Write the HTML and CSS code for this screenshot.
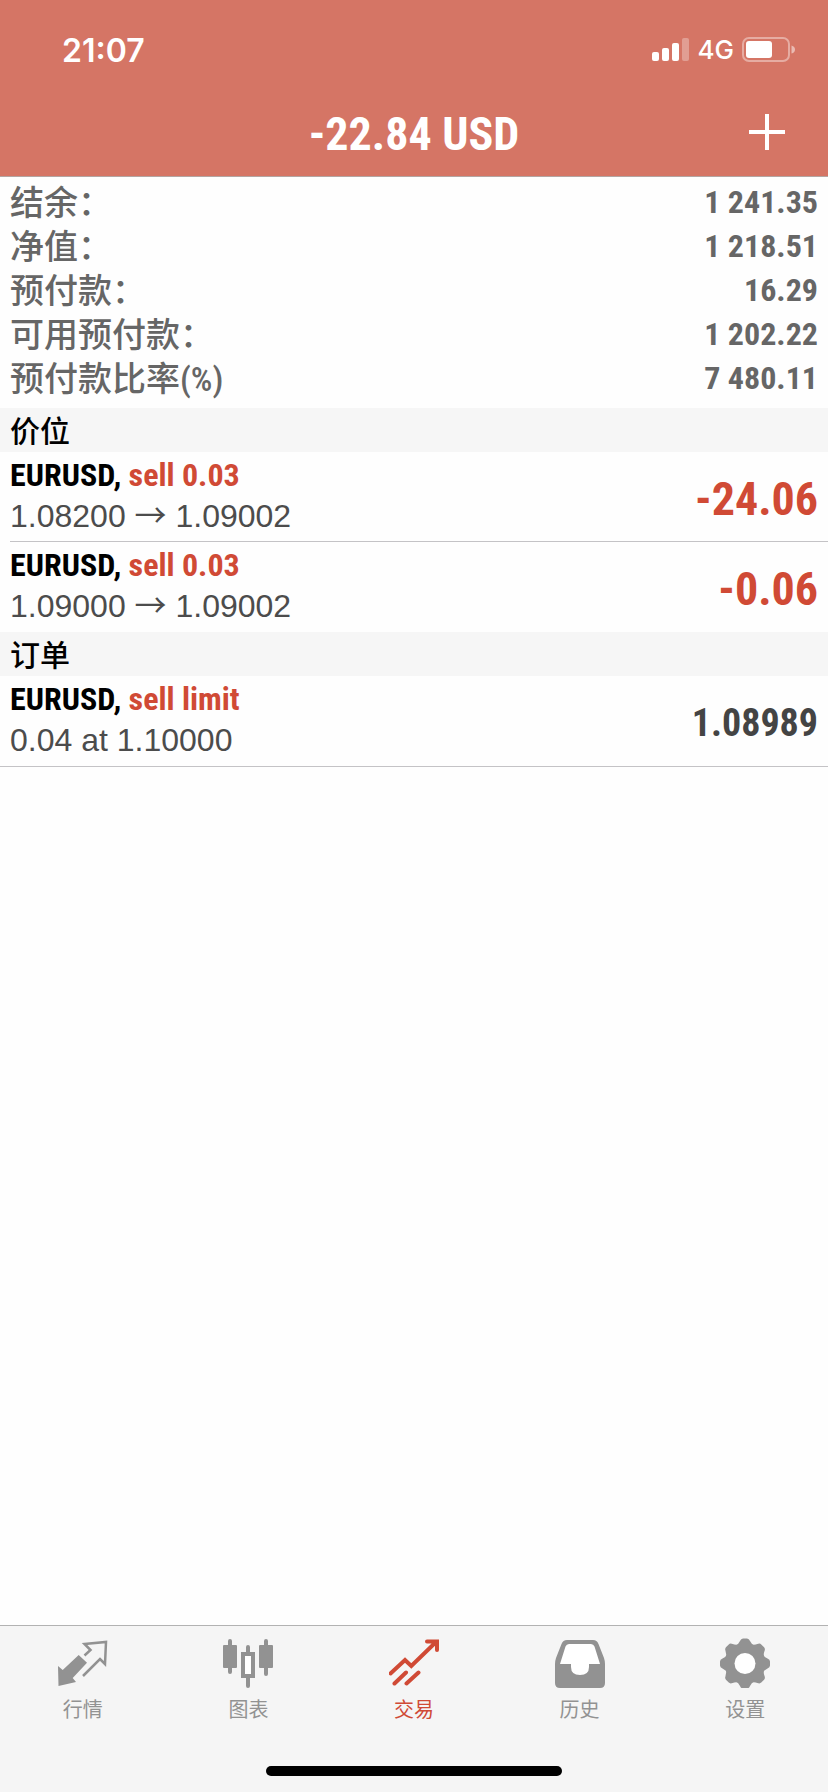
FILE: index.html
```html
<!DOCTYPE html>
<html lang="zh-CN">
<head>
<meta charset="utf-8">
<meta name="viewport" content="width=device-width">
<title>交易</title>
<link rel="stylesheet" href="styles.css">
</head>
<body>
<div class="app">
  <header class="header">
    <div class="status">
      <time class="clock">21:07</time>
      <div class="indicators">
        <svg class="signal" viewBox="0 0 38 24" aria-hidden="true">
          <rect x="0" y="14" width="7" height="9" rx="2"/>
          <rect x="10" y="10" width="7" height="13" rx="2"/>
          <rect x="20" y="5" width="7" height="18" rx="2"/>
          <rect x="30" y="0" width="7" height="23" rx="2" opacity=".3"/>
        </svg>
        <span class="network">4G</span>
        <svg class="battery" viewBox="0 0 54 26" aria-hidden="true">
          <rect x="1" y="1" width="46" height="23" rx="6" fill="none" stroke="#fff" stroke-width="2" opacity=".4"/>
          <rect x="4" y="4" width="26" height="17" rx="3"/>
          <path d="M49.500 8.500q3.500 1 3.500 4t-3.500 4z" opacity=".5"/>
        </svg>
      </div>
    </div>
    <div class="titlebar">
      <h1 class="title">-22.84 USD</h1>
      <button class="add" type="button" aria-label="新订单">
        <svg class="add-icon" viewBox="0 0 36 36" aria-hidden="true"><path d="M18 0V36M0 18H36" stroke="#fff" stroke-width="4"/></svg>
      </button>
    </div>
  </header>

  <main class="content">
    <dl class="summary">
      <div class="summary-row"><dt>结余：</dt><dd>1 241.35</dd></div>
      <div class="summary-row"><dt>净值：</dt><dd>1 218.51</dd></div>
      <div class="summary-row"><dt>预付款：</dt><dd>16.29</dd></div>
      <div class="summary-row"><dt>可用预付款：</dt><dd>1 202.22</dd></div>
      <div class="summary-row"><dt>预付款比率(%)</dt><dd>7 480.11</dd></div>
    </dl>

    <h2 class="section">价位</h2>
    <ul class="list">
      <li class="item">
        <div class="item-main">
          <div class="symbol">EURUSD, <span class="side">sell 0.03</span></div>
          <div class="detail">1.08200 <span class="arrow">→</span> 1.09002</div>
        </div>
        <div class="profit">-24.06</div>
      </li>
      <li class="item">
        <div class="item-main">
          <div class="symbol">EURUSD, <span class="side">sell 0.03</span></div>
          <div class="detail">1.09000 <span class="arrow">→</span> 1.09002</div>
        </div>
        <div class="profit">-0.06</div>
      </li>
    </ul>

    <h2 class="section">订单</h2>
    <ul class="list list-last">
      <li class="item">
        <div class="item-main">
          <div class="symbol">EURUSD, <span class="side">sell limit</span></div>
          <div class="detail">0.04 at 1.10000</div>
        </div>
        <div class="price">1.08989</div>
      </li>
    </ul>
  </main>

  <footer class="footer">
    <nav class="tabs">
      <a class="tab" href="#quotes">
        <svg class="tab-icon" viewBox="0 0 50 50" aria-hidden="true">
          <path d="M20.700 17L29 24.700L14.700 40L18 44L.5 48L0 28L4.700 32Z"/>
          <path d="M26.500 17.500L32.500 12L26.500 6L48 4L47 26L42 21L25 38" fill="none" stroke="currentColor" stroke-width="2.500"/>
        </svg>
        <span>行情</span>
      </a>
      <a class="tab" href="#charts">
        <svg class="tab-icon" viewBox="0 0 50 50" aria-hidden="true">
          <path d="M7 3V34M25 9V48M43 3V36" stroke="currentColor" stroke-width="4" stroke-linecap="round"/>
          <rect x="0" y="7" width="14" height="23" rx="1"/>
          <rect x="36" y="7" width="14" height="23" rx="1"/>
          <rect x="20" y="16" width="10" height="22" fill="#fff" stroke="currentColor" stroke-width="4"/>
        </svg>
        <span>图表</span>
      </a>
      <a class="tab tab-active" href="#trade" aria-current="page">
        <svg class="tab-icon" viewBox="0 0 50 50" aria-hidden="true">
          <path d="M1.500 35.500L16 22L22.300 28L47 4M38 3.500H48V12M5.500 45.500L17 34.500M17.500 45.500L29.500 34.500" fill="none" stroke="currentColor" stroke-width="4" stroke-linecap="round" stroke-linejoin="miter"/>
        </svg>
        <span>交易</span>
      </a>
      <a class="tab" href="#history">
        <svg class="tab-icon" viewBox="0 0 50 50" aria-hidden="true">
          <path d="M12 2H38Q42 2 43.500 6L49 20Q50 23 50 26V45Q50 50 45 50H5Q0 50 0 45V26Q0 23 1 20L6.500 6Q8 2 12 2Z"/>
          <path d="M14 6H36Q38.500 6 39.500 8.500L45 26H34V29Q34 37 25 37T16 29V26H5L10.500 8.500Q11.500 6 14 6Z" fill="#fff"/>
        </svg>
        <span>历史</span>
      </a>
      <a class="tab" href="#settings">
        <svg class="tab-icon" viewBox="0 0 50 50" aria-hidden="true">
          <defs><path id="tooth" d="M15 8Q18.500 6.500 20 3Q21 .5 23 .5H27Q29 .5 30 3Q31.500 6.500 35 8L25 20Z"/></defs>
          <circle cx="25" cy="25.500" r="19"/>
          <use href="#tooth"/>
          <use href="#tooth" transform="rotate(45 25 25.500)"/>
          <use href="#tooth" transform="rotate(90 25 25.500)"/>
          <use href="#tooth" transform="rotate(135 25 25.500)"/>
          <use href="#tooth" transform="rotate(180 25 25.500)"/>
          <use href="#tooth" transform="rotate(225 25 25.500)"/>
          <use href="#tooth" transform="rotate(270 25 25.500)"/>
          <use href="#tooth" transform="rotate(315 25 25.500)"/>
          <circle cx="25" cy="25.500" r="10.500" fill="#fff"/>
        </svg>
        <span>设置</span>
      </a>
    </nav>
    <div class="home-bar"></div>
  </footer>
</div>
</body>
</html>
```
FILE: styles.css
```css
:root {
  --narrow: "Roboto Condensed", "Arial Narrow", "Liberation Sans", "Noto Sans CJK SC", sans-serif;
  --cjk: "Noto Sans CJK SC", sans-serif;
}

* { box-sizing: border-box; }

body {
  margin: 0;
  background: #fefefe;
  font-family: "Liberation Sans", "Noto Sans CJK SC", sans-serif;
}

h1, h2, dl, dd, ul { margin: 0; padding: 0; }
ul { list-style: none; }

.app {
  display: flex;
  flex-direction: column;
  min-height: 100vh;
}

.header {
  background: #d57565;
  border-bottom: 1px solid #b3a5a2;
  color: #fff;
}

.status {
  display: flex;
  justify-content: space-between;
  align-items: center;
  height: 88px;
  padding: 12px 32px 0 62px;
  font-family: Inter, sans-serif;
}

.clock {
  font-size: 32px;
  font-weight: 600;
}

.indicators {
  display: flex;
  align-items: center;
  gap: 8px;
}

.signal { width: 38px; height: 24px; fill: #fff; }
.battery { width: 54px; height: 26px; fill: #fff; }
.network { font-size: 26px; font-weight: 500; line-height: 26px; }

.titlebar {
  display: grid;
  grid-template-columns: 1fr auto 1fr;
  align-items: center;
  height: 88px;
  padding: 0 35px;
}

.title {
  grid-column: 2;
  padding-top: 4px;
  font: bold 46px/56px var(--narrow);
}

.add {
  justify-self: end;
  display: flex;
  padding: 8px;
  border: 0;
  background: none;
}

.add-icon { width: 36px; height: 36px; }

.content { flex: 1; }

.summary {
  padding: 3px 10px 8px;
  color: #666;
}

.summary-row {
  display: flex;
  justify-content: space-between;
  height: 44px;
  line-height: 44px;
}

.summary dt {
  font-family: "Roboto Condensed", "Noto Sans CJK SC", sans-serif;
  font-size: 34px;
  font-weight: 500;
  line-height: 46px;
}

.summary dd {
  font: bold 32px/44px var(--narrow);
}

.section {
  height: 44px;
  padding: 0 10px;
  background: #f6f6f6;
  color: #000;
  font: 500 30px/42px var(--cjk);
}

.item {
  display: flex;
  justify-content: space-between;
  align-items: center;
  height: 90px;
  margin-left: 10px;
  padding-right: 10px;
}

.item:not(:last-child) { border-bottom: 1px solid #c4c3c6; }
.list-last { border-bottom: 1px solid #c4c3c6; }

.item-main { padding-bottom: 2px; }

.symbol {
  font: bold 32px/40px var(--narrow);
  color: #000;
}

.side, .profit { color: #d04a35; }

.detail {
  color: #4c4c4c;
  font-size: 32px;
  line-height: 42px;
}

.arrow { font-family: var(--cjk); line-height: 1; }

.profit, .price { padding-top: 4px; }
.profit { font: bold 46px/56px var(--narrow); }
.price { font: bold 38px/48px var(--narrow); color: #444; }

.footer {
  height: 167px;
  border-top: 1px solid #b2b2b2;
  background: #f5f5f5;
}

.tabs {
  display: flex;
  height: 140px;
  padding-top: 12px;
}

.tab {
  flex: 1;
  display: flex;
  flex-direction: column;
  align-items: center;
  gap: 7px;
  color: #929292;
  font: 20px/28px var(--cjk);
  text-decoration: none;
}

.tab-active { color: #d04a35; }

.tab-icon {
  width: 50px;
  height: 50px;
  fill: currentColor;
}

.home-bar {
  width: 296px;
  height: 10px;
  margin: 0 auto;
  border-radius: 5px;
  background: #000;
}
```
